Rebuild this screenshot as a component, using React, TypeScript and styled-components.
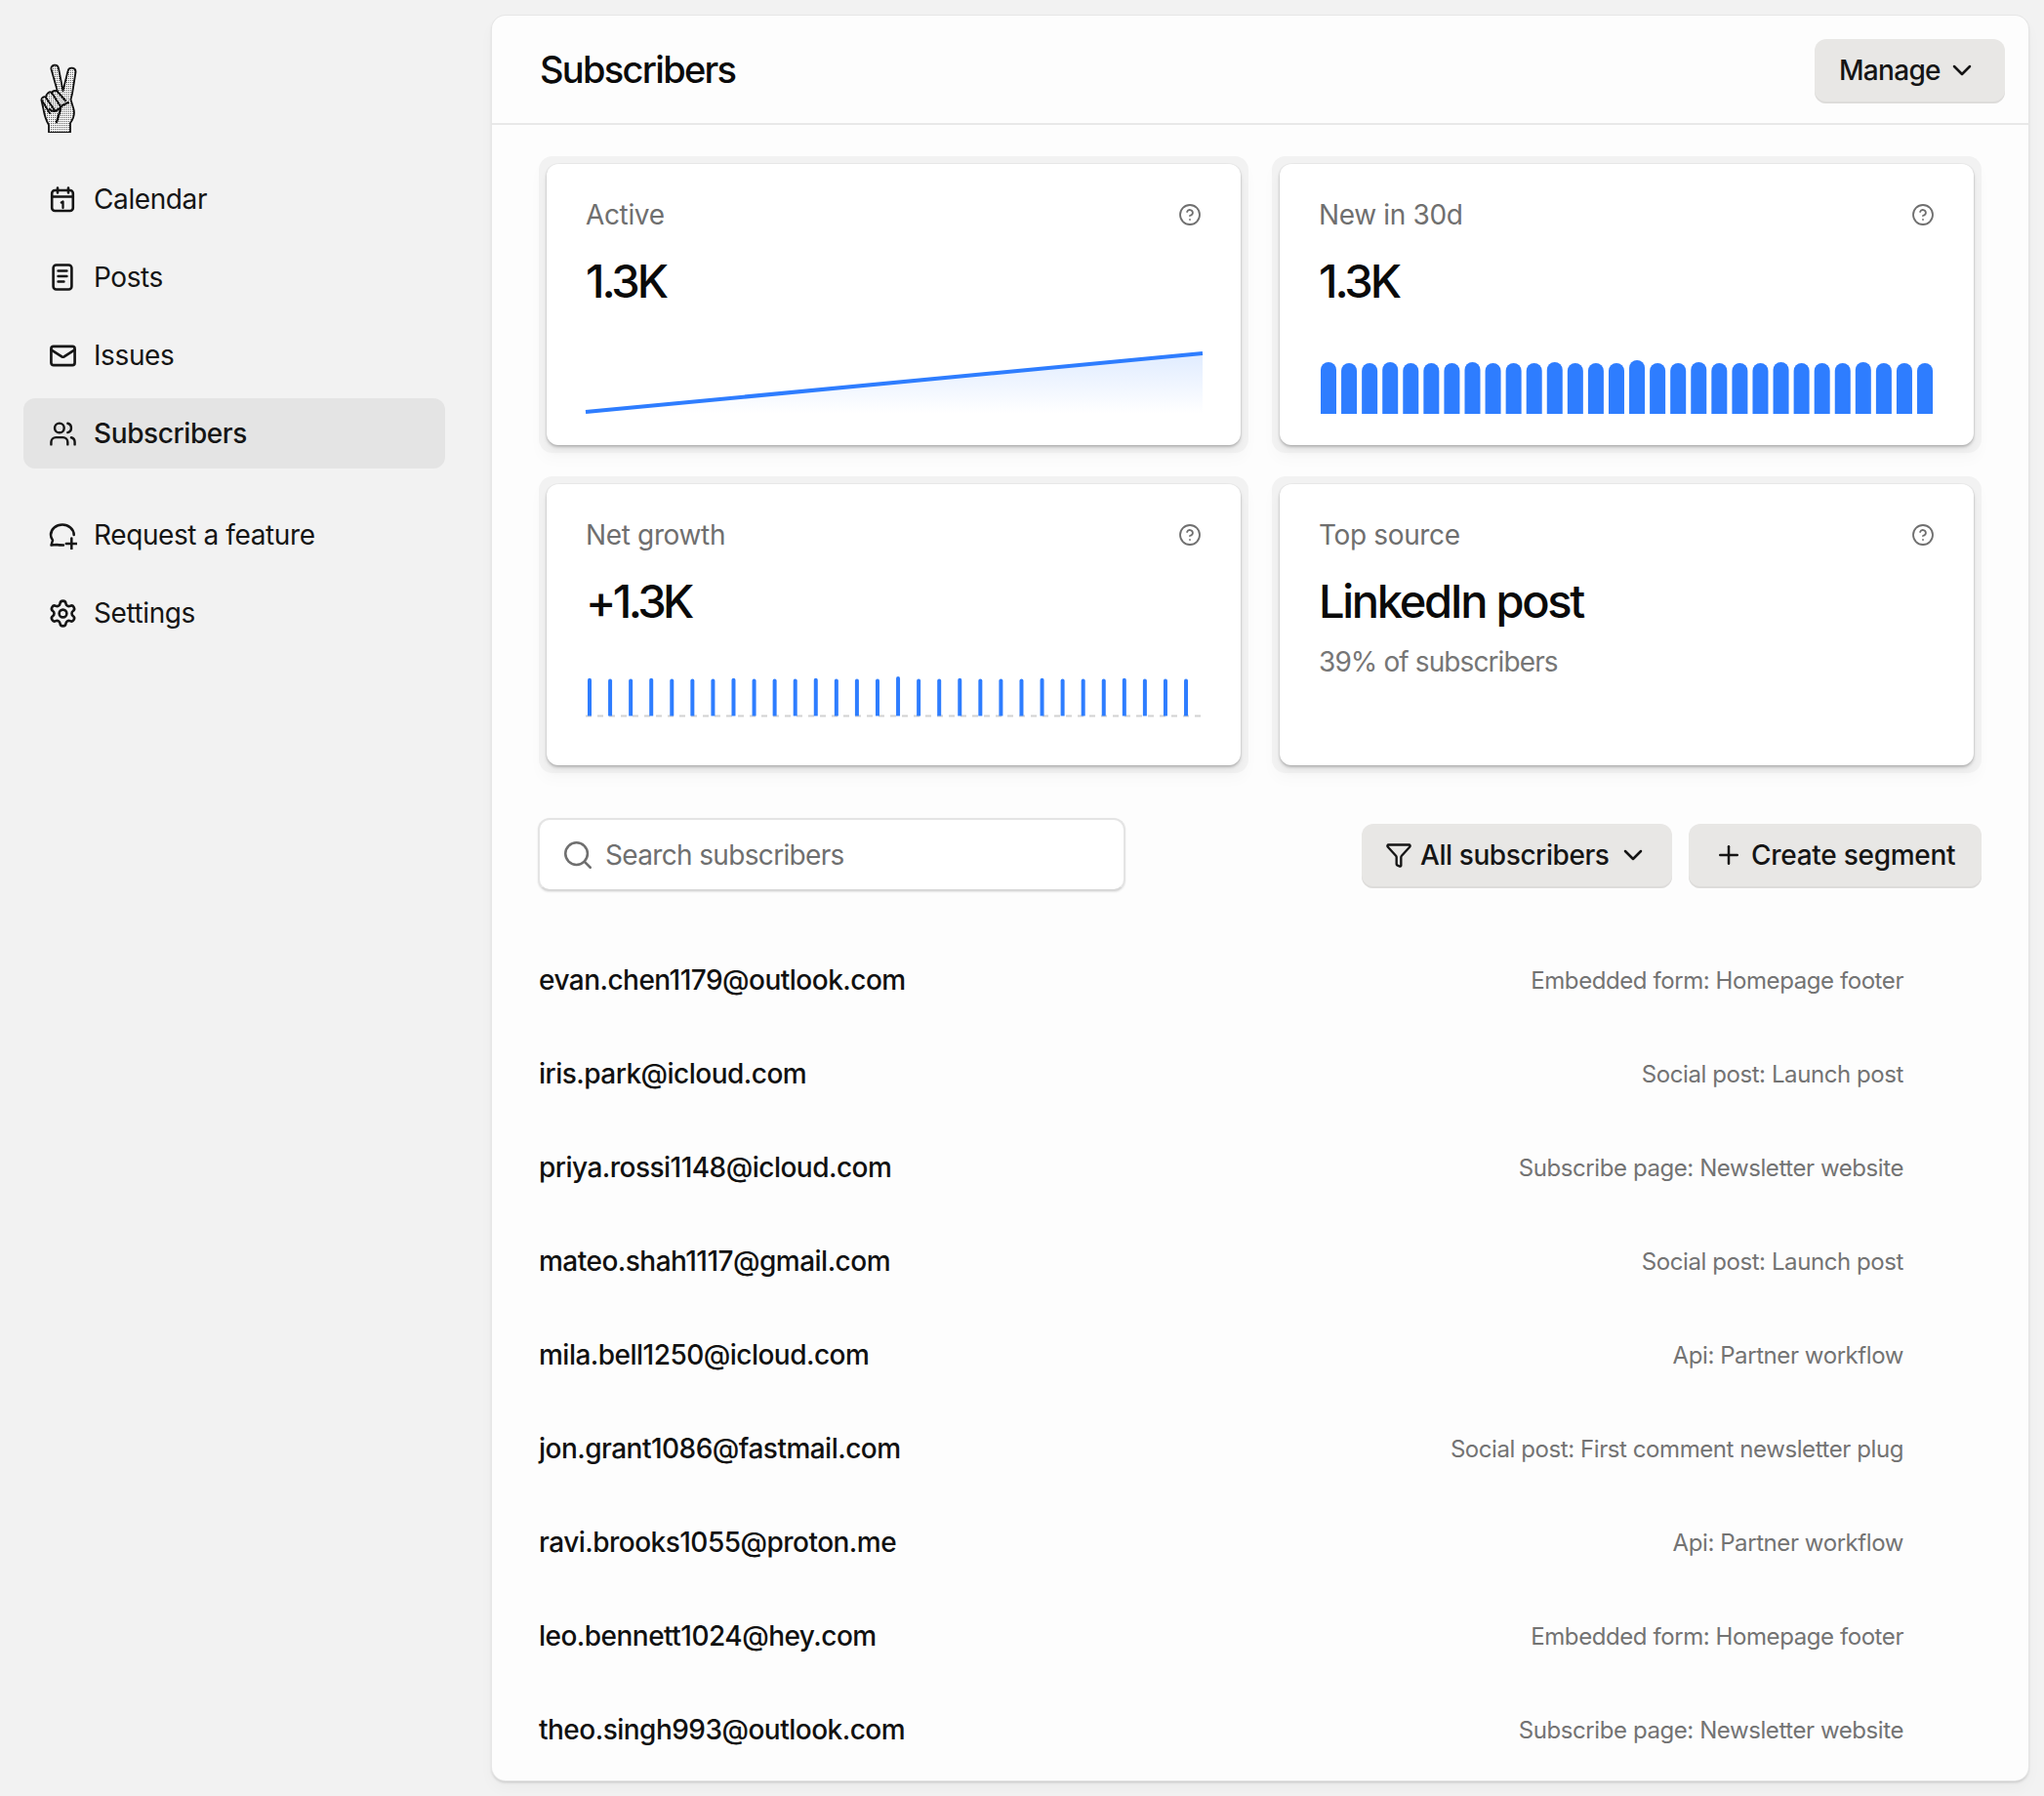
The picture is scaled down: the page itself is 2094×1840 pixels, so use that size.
import React from "react";
import styled, { createGlobalStyle } from "styled-components";
import { Users, Mail, Settings, Search, ChevronDown, Plus, Funnel, CircleHelp } from "lucide-react";

const Global = createGlobalStyle`
  html, body { margin: 0; padding: 0; background: #f2f2f2; }
  body { font-family: Inter, "Liberation Sans", sans-serif; color: #111; }
  * { box-sizing: border-box; }
`;

const Page = styled.div`
  display: grid;
  grid-template-columns: 504px 1574px;
  height: 1840px;
  padding-bottom: 16px;
  overflow: hidden;
`;

const Sidebar = styled.aside`
  display: flex;
  flex-direction: column;
  padding: 64px 48px 0 24px;
`;

const LogoMark = styled.svg`
  width: 38px;
  height: 72px;
  margin: 0 0 32px 17px;
  display: block;
`;

const NavGroup = styled.nav`
  display: flex;
  flex-direction: column;
  gap: 8px;
  margin-bottom: 32px;
`;

const NavItem = styled.div<{ $active?: boolean }>`
  display: flex;
  align-items: center;
  gap: 16px;
  height: 72px;
  padding-left: 24px;
  border-radius: 12px;
  font-size: 28px;
  letter-spacing: -0.4px;
  font-weight: ${(p) => (p.$active ? 500 : 400)};
  background: ${(p) => (p.$active ? "#e4e4e4" : "transparent")};
  color: #151515;
`;

const NavIcon = styled.span`
  display: flex;
  align-items: center;
  justify-content: center;
  width: 32px;
  height: 32px;
  flex: none;
  color: #151515;
`;

const Panel = styled.main`
  margin-top: 16px;
  background: #fdfdfd;
  border-radius: 14px;
  box-shadow: 0 0 0 1px #e6e6e6, 0 2px 3px rgba(0, 0, 0, 0.18), 0 8px 16px rgba(0, 0, 0, 0.03);
  overflow: hidden;
`;

const Header = styled.header`
  display: flex;
  align-items: center;
  justify-content: space-between;
  height: 112px;
  padding: 3px 24px 0 49px;
  border-bottom: 2px solid #e8e8e8;
`;

const Title = styled.h1`
  margin: -3px 0 0;
  font-size: 38px;
  font-weight: 500;
  letter-spacing: -1.7px;
  color: #0b0b0b;
`;

const Button = styled.button`
  display: inline-flex;
  align-items: center;
  height: 66px;
  padding: 0 0 2px;
  border: 0;
  border-radius: 12px;
  background: #e8e7e5;
  box-shadow: inset 0 -2px 0 #dddcda;
  font-family: inherit;
  font-size: 28px;
  font-weight: 500;
  letter-spacing: -0.4px;
  color: #151515;
  white-space: nowrap;
`;

const Chevron = styled(ChevronDown)`
  width: 32px;
  height: 32px;
  stroke-width: 1.9;
  flex: none;
`;

const ManageButton = styled(Button)`
  width: 195px;
  padding-left: 25px;
  gap: 6px;
  letter-spacing: -0.7px;
`;

const Content = styled.div`
  padding: 32px 48px 0;
`;

const CardGrid = styled.section`
  display: grid;
  grid-template-columns: 727px 727px;
  grid-auto-rows: 304px;
  gap: 24px;
`;

const CardShell = styled.div`
  padding: 8px;
  background: #f2f2f2;
  border-radius: 14px;
  box-shadow: 0 8px 14px rgba(0, 0, 0, 0.02);
`;

const Card = styled.div`
  height: 100%;
  padding: 29px 40px 0;
  background: #fff;
  border-radius: 12px;
  box-shadow: 0 0 0 1px rgba(0, 0, 0, 0.03), 0 2px 3px rgba(0, 0, 0, 0.22), 0 6px 10px rgba(0, 0, 0, 0.05);
`;

const CardTop = styled.div`
  display: flex;
  align-items: center;
  justify-content: space-between;
  height: 46px;
  color: #6f6f6f;
  font-size: 28px;
  letter-spacing: -0.35px;
`;

const HelpIcon = styled(CircleHelp)`
  width: 24px;
  height: 24px;
  stroke-width: 1.8;
  color: #6f6f6f;
`;

const Value = styled.div<{ $tracking: number }>`
  margin-top: 11px;
  font-size: 47px;
  line-height: 68px;
  font-weight: 500;
  letter-spacing: ${(p) => p.$tracking}px;
  color: #0a0a0a;
`;

const SubValue = styled.div`
  margin-top: 11px;
  font-size: 28px;
  letter-spacing: -0.9px;
  color: #767676;
`;

const Chart = styled.svg`
  display: block;
  margin-top: 38px;
  width: 632px;
  height: 70px;
  overflow: visible;
`;

const Toolbar = styled.div`
  display: flex;
  align-items: center;
  margin-top: 46px;
`;

const SearchBox = styled.div`
  display: flex;
  align-items: center;
  gap: 11px;
  width: 602px;
  height: 75px;
  margin-left: -1px;
  padding-left: 22px;
  background: #fff;
  border: 2px solid #e4e4e4;
  border-bottom-color: #d8d8d8;
  border-radius: 12px;
  box-shadow: 0 1px 2px rgba(0, 0, 0, 0.1);
  color: #6f6f6f;
  font-size: 28px;
  letter-spacing: -0.66px;
`;

const SearchGlyph = styled(Search)`
  width: 34px;
  height: 34px;
  stroke-width: 1.8;
  flex: none;
`;

const ToolbarActions = styled.div`
  display: flex;
  gap: 17px;
  margin: 2px 0 0 auto;
`;

const FilterButton = styled(Button)`
  width: 318px;
  padding-left: 24px;
  gap: 8px;
  letter-spacing: -0.42px;
`;

const CreateButton = styled(Button)`
  width: 300px;
  padding-left: 26px;
  gap: 8px;
  letter-spacing: -0.28px;
`;

const List = styled.div`
  margin-top: 43px;
`;

const Row = styled.div`
  display: flex;
  align-items: center;
  justify-content: space-between;
  height: 96px;
  padding: 0 80px 0 0;
`;

const Email = styled.span`
  font-size: 28px;
  font-weight: 500;
  letter-spacing: -0.52px;
  color: #111;
`;

const Source = styled.span`
  font-size: 24px;
  letter-spacing: -0.42px;
  color: #737373;
`;

const CalendarIcon = () => (
  <svg width="28" height="28" viewBox="0 0 28 28" fill="none" stroke="currentColor" strokeWidth="2.6" strokeLinecap="round" strokeLinejoin="round">
    <rect x="3.2" y="5" width="21.6" height="21" rx="3" />
    <path d="M3.200 11.500h21.600M9 2.500v5M20 2.500v5" />
    <path d="M12.800 17.500l1.700-1v6.500" strokeWidth="2.300" />
  </svg>
);

const PostsIcon = () => (
  <svg width="28" height="28" viewBox="0 0 28 28" fill="none" stroke="currentColor" strokeWidth="2.6" strokeLinecap="round" strokeLinejoin="round">
    <rect x="4.6" y="1.500" width="18.8" height="25" rx="3" />
    <path d="M9.500 7.500h9M9.500 13h9M9.500 18.500h6" strokeWidth="2.400" />
  </svg>
);

const RequestIcon = () => (
  <svg width="30" height="30" viewBox="0 0 30 30" fill="none" stroke="currentColor" strokeWidth="2.5" strokeLinecap="round" strokeLinejoin="round">
    <path d="M26.700 15C26.700 9 21 4.500 15 4.500 8.500 4.500 3 9 3 15c0 2.500.8 4 2 5.500L3.500 25.500 9 25c2 .5 4 .5 7 .5" />
    <path d="M24.300 18.500v11M18.800 24h11" />
  </svg>
);

const PeaceHand = () => (
  <LogoMark viewBox="21 24 38 72" fill="none">
    <defs>
      <pattern id="stipple" width="2" height="2" patternUnits="userSpaceOnUse">
        <rect width="2" height="2" fill="#f8f8f8" />
        <rect width="0.9" height="0.9" fill="#333" />
      </pattern>
    </defs>
    <path
      d="M32.500 31C31.500 26 39 25 40 30L44.500 53 49.500 33C50.500 28 58 29 57.500 34L54 56 52.500 62 55.500 72C56.500 76 55 82 52 86L52 96 30 96 30 88C27 83 25.500 78 24.500 72L22.500 63C22 60 25 58 27 60 27 56 31 53 33 55 34 53 37 52 39 54Z"
      fill="url(#stipple)"
      stroke="#111"
      strokeWidth="1.800"
      strokeLinejoin="round"
    />
    <path d="M23 63L31 76M27 60L36 73M33 55L42 69M39 54L47 63" stroke="#111" strokeWidth="2" strokeLinecap="round" />
    <path d="M31 72C35 76 40 73 44 68L50 65" stroke="#111" strokeWidth="2.200" strokeLinecap="round" />
    <path d="M42 72L38 85" stroke="#111" strokeWidth="2.400" strokeLinecap="round" />
  </LogoMark>
);

const navTop = [
  { label: "Calendar", icon: <CalendarIcon /> },
  { label: "Posts", icon: <PostsIcon /> },
  { label: "Issues", icon: <Mail size={29} strokeWidth={2.2} /> },
  { label: "Subscribers", icon: <Users size={29} strokeWidth={2} />, active: true },
];

const navBottom = [
  { label: "Request a feature", icon: <RequestIcon /> },
  { label: "Settings", icon: <Settings size={31} strokeWidth={2} /> },
];

const tallBars = [0, 3, 7, 11, 18, 22, 26];
const bars = Array.from({ length: 30 }, (_, i) => (i === 15 ? 3 : tallBars.includes(i) ? 1 : 0));
const PITCH = 21.07;

const AreaChart = () => (
  <Chart viewBox="0 0 632 70">
    <defs>
      <linearGradient id="areaFill" x1="0" y1="0" x2="0" y2="1">
        <stop offset="0" stopColor="#2e7dff" stopOpacity="0.15" />
        <stop offset="1" stopColor="#2e7dff" stopOpacity="0" />
      </linearGradient>
    </defs>
    <path d="M0 62L632 2V64H0Z" fill="url(#areaFill)" />
    <path d="M0 62L632 2" stroke="#2e7dff" strokeWidth="4" fill="none" />
  </Chart>
);

const WideBars = () => (
  <Chart viewBox="0 0 632 70">
    {bars.map((h, i) => {
      const x = 2 + i * PITCH;
      const top = 12 - h;
      return <path key={i} d={`M${x} 64V${top + 8}a8 8 0 0 1 16 0V64Z`} fill="#2e7dff" />;
    })}
  </Chart>
);

const ThinBars = () => (
  <Chart viewBox="0 0 632 70">
    <path d="M0 45.500H632" stroke="#d2d2d2" strokeWidth="2" strokeDasharray="6 6" />
    {bars.map((h, i) => {
      const x = 2 + i * PITCH;
      const top = 7.5 - h * 0.8;
      return <path key={i} d={`M${x} 45.500V${top + 2}a2 2 0 0 1 4 0V45.500Z`} fill="#2e7dff" />;
    })}
  </Chart>
);

const rows = [
  ["evan.chen1179@outlook.com", "Embedded form: Homepage footer"],
  ["iris.park@icloud.com", "Social post: Launch post"],
  ["priya.rossi1148@icloud.com", "Subscribe page: Newsletter website"],
  ["mateo.shah1117@gmail.com", "Social post: Launch post"],
  ["mila.bell1250@icloud.com", "Api: Partner workflow"],
  ["jon.grant1086@fastmail.com", "Social post: First comment newsletter plug"],
  ["ravi.brooks1055@proton.me", "Api: Partner workflow"],
  ["leo.bennett1024@hey.com", "Embedded form: Homepage footer"],
  ["theo.singh993@outlook.com", "Subscribe page: Newsletter website"],
];

const StatCard = ({ label, children }: { label: string; children: React.ReactNode }) => (
  <CardShell>
    <Card>
      <CardTop>
        <span>{label}</span>
        <HelpIcon />
      </CardTop>
      {children}
    </Card>
  </CardShell>
);

export default function App() {
  return (
    <>
      <Global />
      <Page>
        <Sidebar>
          <PeaceHand />
          <NavGroup>
            {navTop.map((n) => (
              <NavItem key={n.label} $active={n.active}>
                <NavIcon>{n.icon}</NavIcon>
                {n.label}
              </NavItem>
            ))}
          </NavGroup>
          <NavGroup>
            {navBottom.map((n) => (
              <NavItem key={n.label}>
                <NavIcon>{n.icon}</NavIcon>
                {n.label}
              </NavItem>
            ))}
          </NavGroup>
        </Sidebar>
        <Panel>
          <Header>
            <Title>Subscribers</Title>
            <ManageButton>
              Manage
              <Chevron />
            </ManageButton>
          </Header>
          <Content>
            <CardGrid>
              <StatCard label="Active">
                <Value $tracking={-3.1}>1.3K</Value>
                <AreaChart />
              </StatCard>
              <StatCard label="New in 30d">
                <Value $tracking={-3.1}>1.3K</Value>
                <WideBars />
              </StatCard>
              <StatCard label="Net growth">
                <Value $tracking={-3.6}>+1.3K</Value>
                <ThinBars />
              </StatCard>
              <StatCard label="Top source">
                <Value $tracking={-2.3}>LinkedIn post</Value>
                <SubValue>39% of subscribers</SubValue>
              </StatCard>
            </CardGrid>
            <Toolbar>
              <SearchBox>
                <SearchGlyph />
                Search subscribers
              </SearchBox>
              <ToolbarActions>
                <FilterButton>
                  <Funnel size={28} strokeWidth={2} />
                  All subscribers
                  <Chevron />
                </FilterButton>
                <CreateButton>
                  <Plus size={30} strokeWidth={2} />
                  Create segment
                </CreateButton>
              </ToolbarActions>
            </Toolbar>
            <List>
              {rows.map(([email, source]) => (
                <Row key={email}>
                  <Email>{email}</Email>
                  <Source>{source}</Source>
                </Row>
              ))}
            </List>
          </Content>
        </Panel>
      </Page>
    </>
  );
}
